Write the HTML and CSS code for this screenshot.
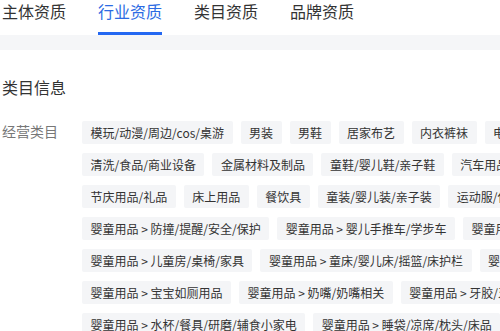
FILE: index.html
```html
<!DOCTYPE html>
<html lang="zh-CN">
  <head>
    <meta charset="UTF-8" />
    <meta name="viewport" content="width=device-width, initial-scale=1.0" />
    <title>资质信息</title>
    <link rel="stylesheet" href="styles.css">
  </head>
  <body>
    <div class="page">
      <div class="tabs">
        <div class="tab">主体资质</div>
        <div class="tab active">行业资质</div>
        <div class="tab">类目资质</div>
        <div class="tab">品牌资质</div>
      </div>
      <div class="divider"></div>

      <div class="section">
        <h2 class="section-title">类目信息</h2>

        <div class="field">
          <div class="field-label">经营类目</div>
          <div class="tag-list">
            <div class="tag-row">
              <span class="tag">模玩/动漫/周边/cos/桌游</span>
              <span class="tag">男装</span>
              <span class="tag">男鞋</span>
              <span class="tag">居家布艺</span>
              <span class="tag">内衣裤袜</span>
              <span class="tag">电子/电工</span>
            </div>
            <div class="tag-row">
              <span class="tag">清洗/食品/商业设备</span>
              <span class="tag">金属材料及制品</span>
              <span class="tag">童鞋/婴儿鞋/亲子鞋</span>
              <span class="tag">汽车用品/电子/清洗</span>
            </div>
            <div class="tag-row">
              <span class="tag">节庆用品/礼品</span>
              <span class="tag">床上用品</span>
              <span class="tag">餐饮具</span>
              <span class="tag">童装/婴儿装/亲子装</span>
              <span class="tag">运动服/休闲服装</span>
            </div>
            <div class="tag-row">
              <span class="tag">婴童用品 &gt; 防撞/提醒/安全/保护</span>
              <span class="tag">婴童用品 &gt; 婴儿手推车/学步车</span>
              <span class="tag">婴童用品 &gt; 背带/学步带</span>
            </div>
            <div class="tag-row">
              <span class="tag">婴童用品 &gt; 儿童房/桌椅/家具</span>
              <span class="tag">婴童用品 &gt; 童床/婴儿床/摇篮/床护栏</span>
              <span class="tag">婴童用品 &gt; 湿巾</span>
            </div>
            <div class="tag-row">
              <span class="tag">婴童用品 &gt; 宝宝如厕用品</span>
              <span class="tag">婴童用品 &gt; 奶嘴/奶嘴相关</span>
              <span class="tag">婴童用品 &gt; 牙胶/牙刷</span>
            </div>
            <div class="tag-row">
              <span class="tag">婴童用品 &gt; 水杯/餐具/研磨/辅食小家电</span>
              <span class="tag">婴童用品 &gt; 睡袋/凉席/枕头/床品</span>
            </div>
          </div>
        </div>
      </div>
    </div>
  </body>
</html>
```

FILE: styles.css
```css
html, body {
  margin: 0;
  padding: 0;
  background: white;
  overflow: hidden;
}
body {
  font-family: "Noto Sans CJK SC", "Noto Sans", sans-serif;
  color: #333;
}
.page {
  width: 800px;
}
.tabs {
  display: flex;
  gap: 32px;
  padding-left: 2px;
}
.tab {
  font-size: 16px;
  line-height: 22px;
  height: 32px;
  color: #333;
  border-bottom: 3px solid transparent;
}
.tab.active {
  color: #2c6be3;
  border-bottom-color: #2468f2;
}
.divider {
  height: 15px;
  background: #f5f6f8;
}
.section {
  padding: 26px 0 0 2px;
}
.section-title {
  margin: 0 0 23px 0;
  font-size: 16px;
  font-weight: normal;
  line-height: 22px;
  color: #333;
}
.field {
  display: flex;
}
.field-label {
  width: 80px;
  flex: none;
  font-size: 14px;
  line-height: 20px;
  color: #777;
}
.tag-list {
  display: flex;
  flex-direction: column;
  gap: 9px;
}
.tag-row {
  display: flex;
  gap: 8px;
}
.tag {
  flex: none;
  font-size: 12px;
  line-height: 23px;
  padding: 0 8.5px;
  background: #f4f5f7;
  border-radius: 2px;
  color: #333;
  white-space: nowrap;
}
```
